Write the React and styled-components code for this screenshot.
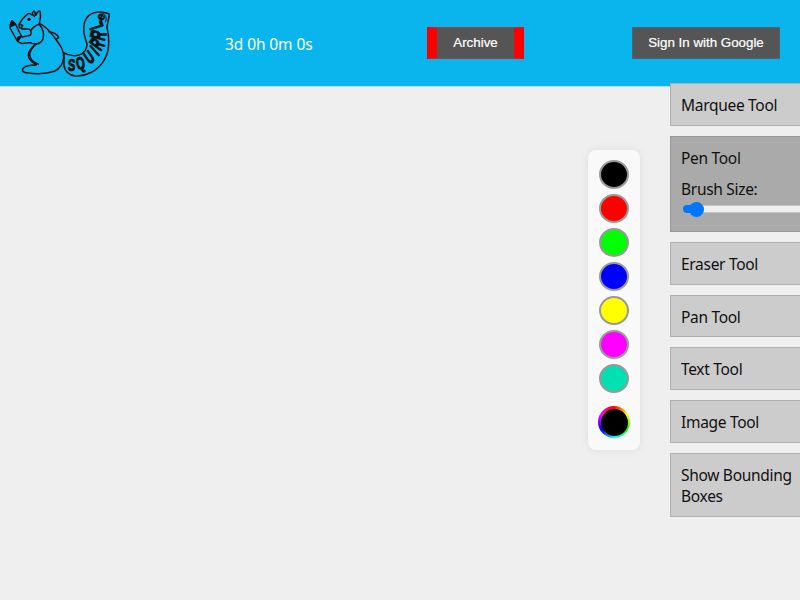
import React from "react";
import styled, { createGlobalStyle } from "styled-components";

const GlobalStyle = createGlobalStyle`
  *, *::before, *::after { box-sizing: border-box; }
  html, body { margin: 0; height: 100%; overflow: hidden; background: #efefef; }
  body { font-family: "Noto Sans", "Open Sans", sans-serif; font-size: 15.5px; color: #111; }
`;

const Page = styled.div`
  position: relative;
  width: 100vw;
  height: 600px;
  overflow: hidden;
`;

const Header = styled.header`
  display: flex;
  align-items: center;
  height: 87px;
  padding: 0 20px 1px 0;
  background: #0ab4ed;
  border-bottom: 1px solid #b5e0ef;
`;

const Logo = styled.svg`
  display: block;
  flex: none;
  width: 120px;
  height: 86px;
`;

const Countdown = styled.div`
  width: 90px;
  margin: 0 112px 0 105px;
  padding-top: 2px;
  line-height: 20px;
  color: #fff;
  white-space: nowrap;
  font-size: 15.5px;
  letter-spacing: -0.1px;
`;

const Button = styled.button`
  width: ${(p) => p.$width}px;
  height: 32px;
  padding: 0;
  margin-left: ${(p) => (p.$end ? "auto" : 0)};
  border: 1px solid #666;
  border-width: ${(p) => (p.$accent ? "1px 10px" : "1px")};
  border-color: ${(p) => (p.$accent ? "#a83c46 #f00" : "#4c6470")};
  background: #555;
  color: #fff;
  font: 13.333px "Liberation Sans", Arial, sans-serif;
  -webkit-text-stroke: 0.2px #fff;
  white-space: nowrap;
`;

const Toolbar = styled.aside`
  position: absolute;
  top: 83.33px;
  left: 670px;
  width: 150px;
  display: flex;
  flex-direction: column;
  gap: 10px;
`;

const Tool = styled.div`
  height: ${(p) => p.$height || 42.67}px;
  padding: 11px 9px 0 10px;
  border: 1px solid ${(p) => (p.$active ? "#999" : "#b0b0b0")};
  background: ${(p) => (p.$active ? "#aaa" : "#ccc")};
  line-height: 21px;
  letter-spacing: -0.3px;
`;

const ToolName = styled.div`
  width: 115px;
`;

const BrushLabel = styled.div`
  margin-top: 10px;
`;

const Track = styled.div`
  display: flex;
  align-items: center;
  width: 129px;
  height: 8px;
  margin: 5.5px 0 0 2px;
  border: 1px solid #c4c4c4;
  border-radius: 4px;
  background: #efefef;
`;

const TrackFill = styled.div`
  flex: none;
  width: 12px;
  height: 8px;
  margin-left: -1px;
  border-radius: 4px 0 0 4px;
  background: #0075ff;
`;

const Thumb = styled.div`
  flex: none;
  width: 15px;
  height: 15px;
  margin-left: -6px;
  border-radius: 50%;
  background: #0075ff;
`;

const Palette = styled.div`
  position: absolute;
  top: 150px;
  left: 588px;
  width: 52px;
  height: 300px;
  padding-top: 10px;
  display: flex;
  flex-direction: column;
  align-items: center;
  gap: 5px;
  border-radius: 8px;
  background: #f9f9f9;
  box-shadow: 0 0 10px rgba(0, 0, 0, 0.08);
`;

const Swatch = styled.div`
  flex: none;
  width: 30px;
  height: 29px;
  border: 2px solid #999;
  border-radius: 50%;
  background: ${(p) => p.$color};
`;

const Picker = styled.div`
  display: grid;
  place-items: center;
  flex: none;
  width: 32px;
  height: 32px;
  margin-top: 8px;
  border-radius: 50%;
  background: conic-gradient(red, yellow, lime, aqua, blue, magenta, red);
`;

const PickerCore = styled.div`
  width: 27px;
  height: 27px;
  border-radius: 50%;
  background: #000;
`;

const colors = ["#000", "#f00", "#0f0", "#00f", "#ff0", "#f0f", "#00e0b0"];

/* character, centre x, centre y, rotation, horizontal stretch, vertical stretch */
const letters = [
  ["S", 215, 195, 3, 1.1, 1.65],
  ["Q", 241, 189, -12, 1.1, 1.75],
  ["U", 267, 171, -34, 1.1, 1.8],
  ["I", 284, 152, -42, 1.05, 1.9],
  ["R", 291, 132, -54, 1.1, 2.1],
  ["R", 294, 106, -74, 1.2, 2.2],
  ["L", 287, 77, -108, 1.15, 2],
  ["e", 304, 51, -60, 1.2, 1.2],
];

function Squirrel() {
  return (
    <Logo viewBox="0 0 360 258" fill="none" stroke="#101010" strokeWidth="4.5" strokeLinecap="round" strokeLinejoin="round">
      <path d="M58 72C64 61 72 50 82 43C86 38 92 42 96 45C97 38 100 33 103 34C106 37 105 43 107 46C110 39 116 31 120 33C123 42 121 57 118 70C136 78 151 95 164 113C177 131 193 150 191 173C189 192 178 207 163 214C139 222 104 222 78 218C63 216 65 205 77 200C86 195 98 197 110 194C98 188 86 177 85 166C84 153 96 142 109 131" />
      <path d="M58 72C56 79 60 85 67 87C75 88 82 86 88 88C95 92 94 99 91 106L67 111M53 124L64 130C77 131 82 127 91 128C107 136 123 132 129 117C133 102 128 85 118 73M93 91C99 80 109 76 118 73M146 95C160 96 174 103 176 113L168 118M107 132C93 147 89 156 89 165C91 177 101 188 115 192" />
      <path d="M31 75L36 62L48 75L64 108L52 123L30 84ZM31 80L42 75M52 123L53 113L64 108" />
      <path fill="#101010" d="M31 75L36 62L47 73ZM53 123L54 112L64 108Z" />
      <circle cx="87" cy="58" r="5" fill="#101010" stroke="none" />
      <path d="M58 72L68 76L65 82M98 43L103 49" />
      <path d="M189 157C208 169 232 170 247 161C262 149 264 135 257 119C247 92 249 61 267 46C284 33 306 34 327 41C329 52 322 66 321 82C329 119 329 157 310 184C292 213 257 230 226 228C206 225 194 212 192 197M192 160V200" />
      <path d="M305 38C318 44 322 54 316 66" strokeWidth="3" />
      <g fill="#101010" stroke="#101010" strokeWidth="1.8" fontFamily="Liberation Sans, sans-serif" fontWeight="700" textAnchor="middle">
        {letters.map(([c, x, y, r, sx, sy], i) => (
          <text key={i} transform={`translate(${x} ${y}) rotate(${r}) scale(${sx} ${sy})`} y={c === "e" ? 8 : 10.5} fontSize="30">
            {c}
          </text>
        ))}
      </g>
    </Logo>
  );
}

export default function App() {
  return (
    <Page>
      <GlobalStyle />
      <Header>
        <Squirrel />
        <Countdown>3d 0h 0m 0s</Countdown>
        <Button $width={97} $accent>Archive</Button>
        <Button $width={148} $end>Sign In with Google</Button>
      </Header>
      <Toolbar>
        <Tool><ToolName>Marquee Tool</ToolName></Tool>
        <Tool $active $height={96}>
          <ToolName>Pen Tool</ToolName>
          <BrushLabel>Brush Size:</BrushLabel>
          <Track>
            <TrackFill />
            <Thumb />
          </Track>
        </Tool>
        <Tool><ToolName>Eraser Tool</ToolName></Tool>
        <Tool><ToolName>Pan Tool</ToolName></Tool>
        <Tool><ToolName>Text Tool</ToolName></Tool>
        <Tool><ToolName>Image Tool</ToolName></Tool>
        <Tool $height={64}><ToolName>Show Bounding Boxes</ToolName></Tool>
      </Toolbar>
      <Palette>
        {colors.map((c) => (
          <Swatch key={c} $color={c} />
        ))}
        <Picker>
          <PickerCore />
        </Picker>
      </Palette>
    </Page>
  );
}
